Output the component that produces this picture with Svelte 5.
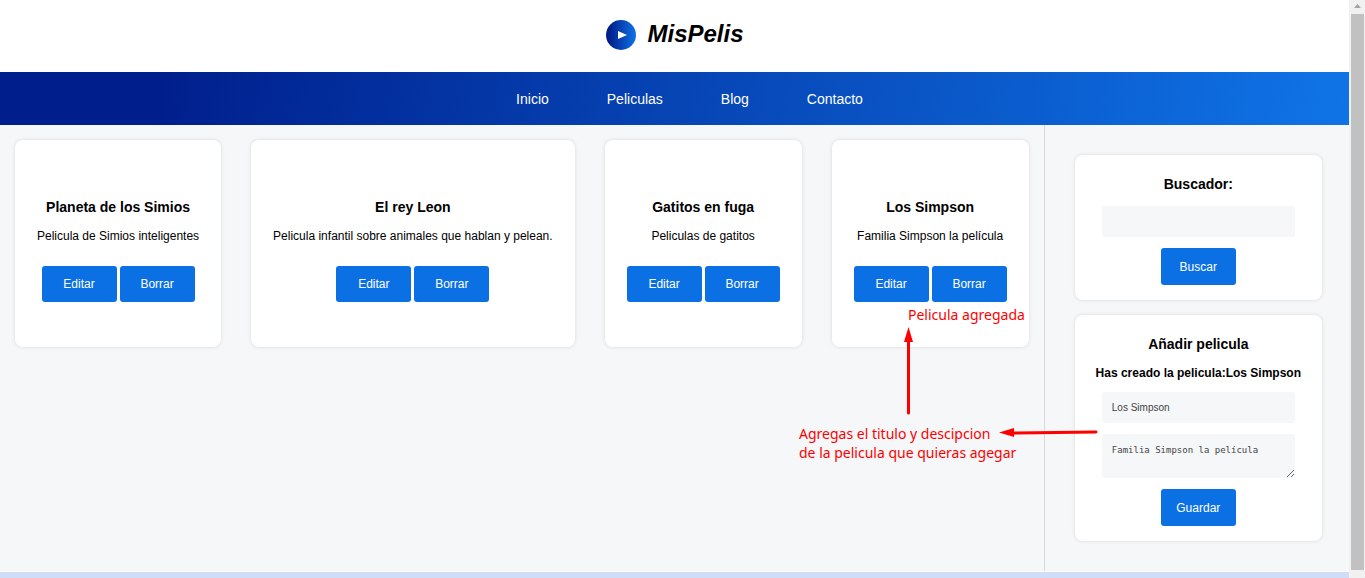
<script>
  const links = ['Inicio', 'Peliculas', 'Blog', 'Contacto'];
  const movies = [
    { title: 'Planeta de los Simios', text: 'Pelicula de Simios inteligentes' },
    { title: 'El rey Leon', text: 'Pelicula infantil sobre animales que hablan y pelean.' },
    { title: 'Gatitos en fuga', text: 'Peliculas de gatitos' },
    { title: 'Los Simpson', text: 'Familia Simpson la película' }
  ];
  let query = $state('');
  let title = $state('Los Simpson');
  let description = $state('Familia Simpson la película');
</script>

<div class="window">
  <div class="page">
    <header>
      <svg class="logo" viewBox="0 0 30 30" aria-hidden="true">
        <defs>
          <linearGradient id="disc">
            <stop offset="0.12" stop-color="#001f8d" />
            <stop offset="1" stop-color="#0f74e7" />
          </linearGradient>
        </defs>
        <circle cx="15" cy="15" r="15" fill="url(#disc)" />
        <path d="M12 11 21 15 12 19Z" fill="#fff" />
      </svg>
      <h1>MisPelis</h1>
    </header>

    <nav>
      {#each links as link}
        <a href="#{link.toLowerCase()}">{link}</a>
      {/each}
    </nav>

    <div class="body">
      <main>
        {#each movies as movie}
          <article>
            <h3>{movie.title}</h3>
            <p>{movie.text}</p>
            <div class="actions">
              <button type="button">Editar</button>
              <button type="button">Borrar</button>
            </div>
          </article>
        {/each}
      </main>

      <aside>
        <form class="panel" onsubmit={(e) => e.preventDefault()}>
          <h3><label for="search">Buscador:</label></h3>
          <input id="search" type="text" bind:value={query} />
          <button type="submit">Buscar</button>
        </form>
        <form class="panel" onsubmit={(e) => e.preventDefault()}>
          <h3>Añadir pelicula</h3>
          <strong>Has creado la pelicula:Los Simpson</strong>
          <input type="text" aria-label="Titulo" bind:value={title} />
          <textarea aria-label="Descripcion" spellcheck="false" bind:value={description}></textarea>
          <button type="submit">Guardar</button>
        </form>
      </aside>
    </div>

    <footer></footer>

    <p class="note added">Pelicula agregada</p>
    <p class="note help">Agregas el titulo y descipcion<br />de la pelicula que quieras agegar</p>
    <svg class="arrows" viewBox="0 0 20 92" aria-hidden="true">
      <path d="M10.500 86V12" stroke="#f00" stroke-width="3" stroke-linecap="round" />
      <path d="M10.500 0 15 15H6Z" fill="#f00" />
    </svg>
    <svg class="arrows side" viewBox="0 0 100 10" aria-hidden="true">
      <path d="M12 6 97 5" stroke="#f00" stroke-width="3" stroke-linecap="round" />
      <path d="M0 5.500 15 1V10Z" fill="#f00" />
    </svg>
  </div>

  <div class="scrollbar" aria-hidden="true">
    <svg viewBox="0 0 16 14"><path d="M5 8H12L8.500 4Z" fill="#a3a3a3" /></svg>
    <div class="thumb"></div>
  </div>
</div>

<style>
  :global(body) {
    margin: 0;
    background: #fff;
  }
  .window {
    display: flex;
    min-height: 100vh;
    font-family: 'Liberation Sans', Arial, sans-serif;
    color: #000;
  }
  .page {
    position: relative;
    flex: 1;
    min-width: 0;
    display: flex;
    flex-direction: column;
  }
  header {
    display: flex;
    align-items: center;
    justify-content: center;
    gap: 11px;
    height: 72px;
    box-sizing: border-box;
    padding: 0 0 2px 1px;
  }
  .logo {
    width: 30px;
    height: 30px;
  }
  h1 {
    margin: 0;
    font-size: 24px;
    line-height: 28px;
    font-style: italic;
    padding-bottom: 2px;
  }
  nav {
    display: flex;
    align-items: center;
    justify-content: center;
    gap: 58px;
    height: 53px;
    padding-left: 30px;
    background: linear-gradient(100deg, #001f8d 12%, #0f74e7 100%);
  }
  nav a {
    color: #fff;
    font-size: 14px;
    text-decoration: none;
  }
  .body {
    flex: 1;
    display: flex;
    background: #f5f7f9;
  }
  main {
    display: flex;
    align-items: flex-start;
    gap: 30px;
    padding: 15px;
  }
  article,
  .panel {
    display: flex;
    flex-direction: column;
    align-items: center;
    box-sizing: border-box;
    background: #fff;
    border-radius: 8px;
    box-shadow: 0 0 4px rgba(0, 0, 0, 0.12);
    text-align: center;
  }
  article {
    padding: 58px 22px 45px;
  }
  h3 {
    margin: 0;
    font-size: 14px;
    line-height: 18px;
  }
  article p {
    margin: 13px 0 22px;
    font-size: 12px;
    line-height: 15px;
    white-space: nowrap;
  }
  .actions {
    display: flex;
    gap: 3px;
  }
  button {
    width: 75px;
    height: 36px;
    padding: 0;
    border: 0;
    border-radius: 3px;
    background: #0c70e5;
    color: #fff;
    font: 12px 'Liberation Sans', Arial, sans-serif;
  }
  aside {
    flex: 1;
    display: flex;
    flex-direction: column;
    gap: 15px;
    padding: 30px 27px 29px 30px;
    border-left: 1px solid #d8dadd;
  }
  .panel {
    padding: 20px 20px 15px;
  }
  .panel h3 {
    margin-bottom: 13px;
  }
  .panel strong {
    margin-bottom: 11px;
    font-size: 12px;
    line-height: 15px;
    white-space: nowrap;
  }
  input,
  textarea {
    display: block;
    width: 193px;
    box-sizing: border-box;
    margin: 0 0 11px;
    border: 0;
    border-radius: 3px;
    background: #f5f7f9;
    color: #444;
  }
  input {
    height: 31px;
    padding: 0 10px;
    font: 10px 'Liberation Sans', Arial, sans-serif;
  }
  textarea {
    height: 44px;
    padding: 10px;
    font: 9px/12px 'DejaVu Sans Mono', monospace;
    overflow: hidden;
  }
  .panel button {
    height: 37px;
  }
  footer {
    height: 6px;
    border-top: 1px solid #fff;
    background: #d0ddf8;
  }
  .note {
    position: absolute;
    margin: 0;
    color: #f00;
    font: 14px/19px 'Noto Sans', sans-serif;
    white-space: nowrap;
  }
  .added {
    left: 908px;
    top: 305px;
  }
  .help {
    left: 799px;
    top: 424px;
  }
  .arrows {
    position: absolute;
    left: 898px;
    top: 327px;
    width: 20px;
    height: 92px;
    pointer-events: none;
  }
  .side {
    left: 999px;
    top: 427px;
    width: 100px;
    height: 10px;
  }
  .scrollbar {
    display: flex;
    flex-direction: column;
    width: 16px;
    background: #f1f1f1;
  }
  .scrollbar svg {
    width: 16px;
    height: 14px;
  }
  .thumb {
    flex: 1;
    margin: 0 1px 8px 2px;
    background: #c1c1c1;
  }
</style>
